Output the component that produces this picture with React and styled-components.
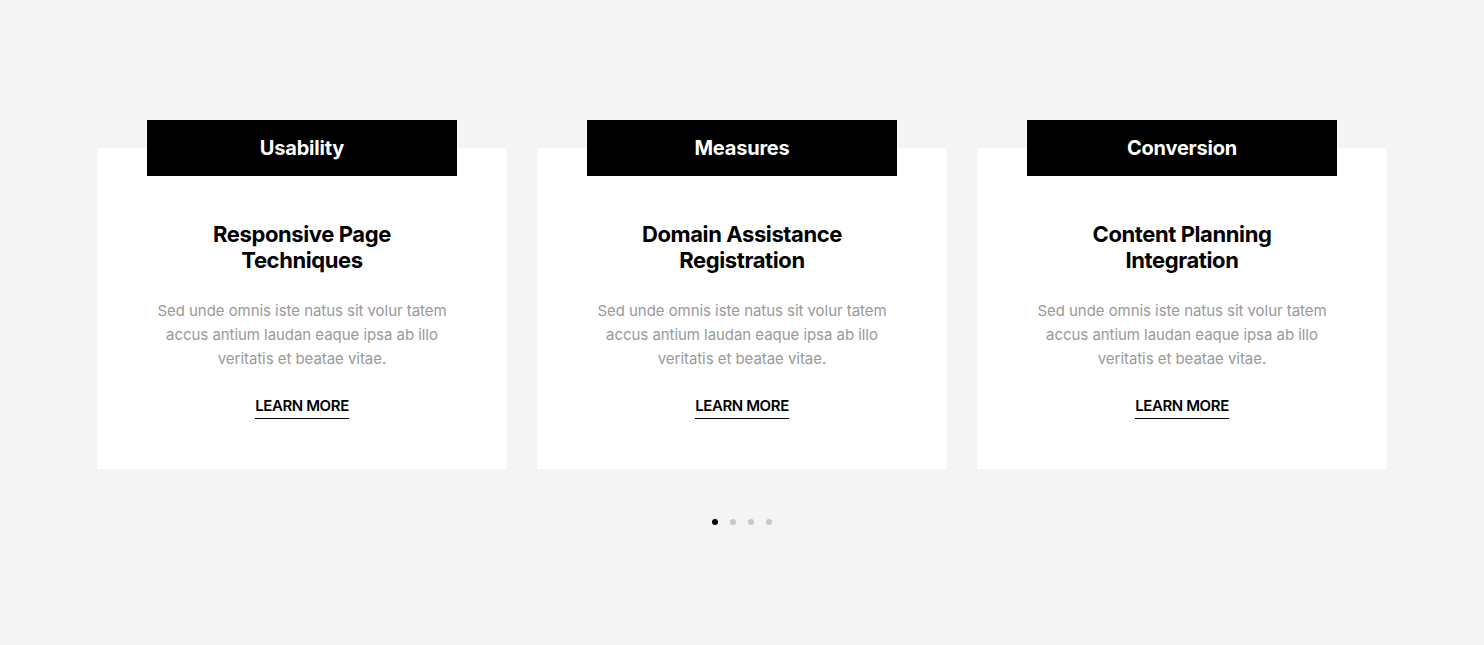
import React from 'react';
import styled, { createGlobalStyle } from 'styled-components';

const Global = createGlobalStyle`
  html, body {
    margin: 0;
    padding: 0;
    background: #f4f4f4;
    font-family: Inter, "Noto Sans", sans-serif;
  }
`;

const services = [
  { tag: 'Usability', title: ['Responsive Page', 'Techniques'] },
  { tag: 'Measures', title: ['Domain Assistance', 'Registration'] },
  { tag: 'Conversion', title: ['Content Planning', 'Integration'] },
];

const App = () => {
  return (
    <Section>
      <Global />
      <div className='cards'>
        {services.map((item, index) => (
          <Card key={index}>
            <Tab>{item.tag}</Tab>
            <h3>
              {item.title[0]}
              <br />
              {item.title[1]}
            </h3>
            <p>
              Sed unde omnis iste natus sit volur tatem accus antium laudan eaque ipsa ab illo veritatis et beatae vitae.
            </p>
            <a href="#">LEARN MORE</a>
          </Card>
        ))}
      </div>
      <Dots>
        {[0, 1, 2, 3].map((i) => (
          <Dot key={i} active={i === 0} />
        ))}
      </Dots>
    </Section>
  );
};

export default App;

const Section = styled.section`
  height: 645px;
  box-sizing: border-box;
  padding-top: 148px;
  .cards {
    display: flex;
    justify-content: center;
    gap: 30px;
  }
`;

const Card = styled.div`
  width: 410px;
  box-sizing: border-box;
  background: #fff;
  padding: 0 50px 50px;
  display: flex;
  flex-direction: column;
  align-items: center;
  text-align: center;
  h3 {
    margin: 45px 0 0;
    font-size: 22px;
    line-height: 26px;
    font-weight: 700;
    color: #000;
    letter-spacing: -0.4px;
  }
  p {
    margin: 26px 0 0;
    font-size: 15px;
    line-height: 24px;
    color: #999;
    letter-spacing: -0.05px;
  }
  a {
    margin-top: 25px;
    font-size: 15px;
    line-height: 20px;
    font-weight: 600;
    color: #000;
    text-decoration: none;
    padding-bottom: 2px;
    border-bottom: 1px solid #000;
    letter-spacing: -0.4px;
  }
`;

const Tab = styled.div`
  width: 310px;
  height: 56px;
  margin-top: -28px;
  background: #000;
  color: #fff;
  font-size: 20px;
  font-weight: 700;
  display: flex;
  align-items: center;
  justify-content: center;
  letter-spacing: -0.2px;
`;

const Dots = styled.div`
  display: flex;
  justify-content: center;
  gap: 12px;
  margin-top: 50px;
`;

const Dot = styled.span`
  width: 6px;
  height: 6px;
  border-radius: 50%;
  background: ${(p) => (p.active ? '#000' : '#c8c8c8')};
`;
